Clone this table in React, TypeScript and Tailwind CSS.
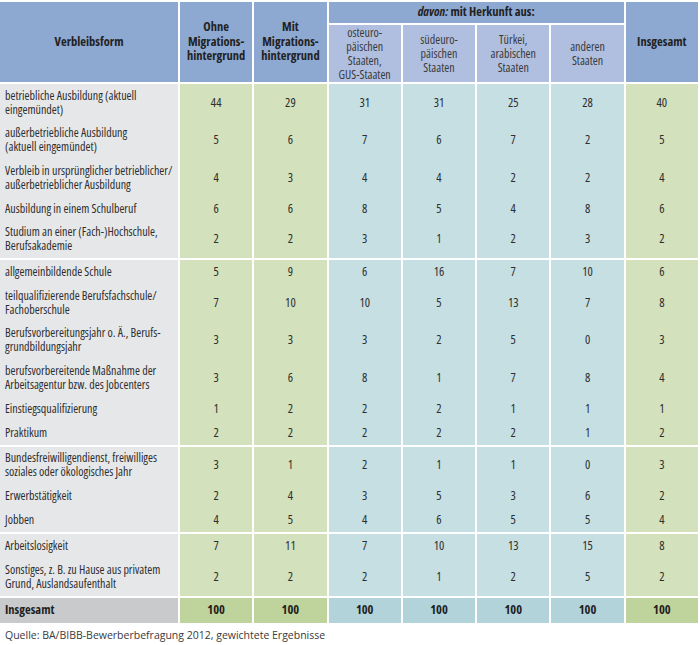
import React from "react";

type Row = { label: string[]; values: number[] };

const groups: Row[][] = [
  [
    { label: ["betriebliche Ausbildung (aktuell", "eingemündet)"], values: [44, 29, 31, 31, 25, 28, 40] },
    { label: ["außerbetriebliche Ausbildung", "(aktuell eingemündet)"], values: [5, 6, 7, 6, 7, 2, 5] },
    { label: ["Verbleib in ursprünglicher betrieblicher/", "außerbetrieblicher Ausbildung"], values: [4, 3, 4, 4, 2, 2, 4] },
    { label: ["Ausbildung in einem Schulberuf"], values: [6, 6, 8, 5, 4, 8, 6] },
    { label: ["Studium an einer (Fach-)Hochschule,", "Berufsakademie"], values: [2, 2, 3, 1, 2, 3, 2] },
  ],
  [
    { label: ["allgemeinbildende Schule"], values: [5, 9, 6, 16, 7, 10, 6] },
    { label: ["teilqualifizierende Berufsfachschule/", "Fachoberschule"], values: [7, 10, 10, 5, 13, 7, 8] },
    { label: ["Berufsvorbereitungsjahr o. Ä., Berufs-", "grundbildungsjahr"], values: [3, 3, 3, 2, 5, 0, 3] },
    { label: ["berufsvorbereitende Maßnahme der", "Arbeitsagentur bzw. des Jobcenters"], values: [3, 6, 8, 1, 7, 8, 4] },
    { label: ["Einstiegsqualifizierung"], values: [1, 2, 2, 2, 1, 1, 1] },
    { label: ["Praktikum"], values: [2, 2, 2, 2, 2, 1, 2] },
  ],
  [
    { label: ["Bundesfreiwilligendienst, freiwilliges", "soziales oder ökologisches Jahr"], values: [3, 1, 2, 1, 1, 0, 3] },
    { label: ["Erwerbstätigkeit"], values: [2, 4, 3, 5, 3, 6, 2] },
    { label: ["Jobben"], values: [4, 5, 4, 6, 5, 5, 4] },
  ],
  [
    { label: ["Arbeitslosigkeit"], values: [7, 11, 7, 10, 13, 15, 8] },
    { label: ["Sonstiges, z. B. zu Hause aus privatem", "Grund, Auslandsaufenthalt"], values: [2, 2, 2, 1, 2, 5, 2] },
  ],
];

// green for the two main columns and the total, teal for the origin columns
const cellBg = (i: number) => (i < 2 || i === 6 ? "bg-[#d3e1bc]" : "bg-[#c6dfe3]");
const totalBg = (i: number) => (i < 2 || i === 6 ? "bg-[#bfd49d]" : "bg-[#b2d3da]");

const cols = "grid grid-cols-[178px_repeat(7,minmax(0,1fr))] gap-x-[2px]";
const head = "bg-[#8da8d1] flex items-center justify-center text-center font-bold text-[#222]";
const sub = "bg-[#b0bfdf] flex items-center justify-center text-center text-[#3a3a3a] text-[12px] leading-[14px]";

const App: React.FC = () => {
  return (
    <div className="w-[700px] h-[645px] bg-white text-[#2e2e2e] overflow-hidden font-['Open_Sans',sans-serif] font-stretch-condensed">
      <div className="w-[698px] pt-[2px]">
        {/* header */}
        <div className={`${cols} grid-rows-[21px_57px] gap-y-[2px] text-[12.5px] leading-[14.5px]`}>
          <div className={`${head} row-span-2`}>Verbleibsform</div>
          <div className={`${head} row-span-2`}>
            Ohne
            <br />
            Migrations-
            <br />
            hintergrund
          </div>
          <div className={`${head} row-span-2`}>
            Mit
            <br />
            Migrations-
            <br />
            hintergrund
          </div>
          <div className={`${head} col-span-4`}>
            <i>davon:</i>&nbsp;mit Herkunft aus:
          </div>
          <div className={`${head} row-span-2`}>Insgesamt</div>
          <div className={sub}>
            osteuro-
            <br />
            päischen
            <br />
            Staaten,
            <br />
            GUS-Staaten
          </div>
          <div className={sub}>
            südeuro-
            <br />
            päischen
            <br />
            Staaten
          </div>
          <div className={sub}>
            Türkei,
            <br />
            arabischen
            <br />
            Staaten
          </div>
          <div className={sub}>
            anderen
            <br />
            Staaten
          </div>
        </div>

        {/* body */}
        <div className="mt-[2px] flex flex-col gap-y-[2px] text-[12.5px] leading-[14px]">
          {groups.map((g, gi) => (
            <div key={gi} className={cols}>
              {g.map((r, ri) => (
                <React.Fragment key={ri}>
                  <div className="bg-[#e6e7e9] pl-[5px] py-[4.75px] min-h-[24px] flex flex-col justify-center whitespace-nowrap text-[12px]">
                    {r.label.map((l, li) => (
                      <div key={li}>{l}</div>
                    ))}
                  </div>
                  {r.values.map((v, vi) => (
                    <div key={vi} className={`${cellBg(vi)} flex items-center justify-center`}>
                      {v}
                    </div>
                  ))}
                </React.Fragment>
              ))}
            </div>
          ))}
          <div className={`${cols} h-[25px] font-bold text-[#1f1f1f]`}>
            <div className="bg-[#c9cacc] pl-[5px] flex items-center">Insgesamt</div>
            {[0, 1, 2, 3, 4, 5, 6].map((i) => (
              <div key={i} className={`${totalBg(i)} flex items-center justify-center`}>
                100
              </div>
            ))}
          </div>
        </div>

        {/* source */}
        <p className="mt-[5px] pl-[5px] text-[10.5px] leading-[14px] text-[#3a3a3a] font-stretch-normal">
          Quelle: BA/BIBB-Bewerberbefragung 2012, gewichtete Ergebnisse
        </p>
      </div>
    </div>
  );
};

export default App;
